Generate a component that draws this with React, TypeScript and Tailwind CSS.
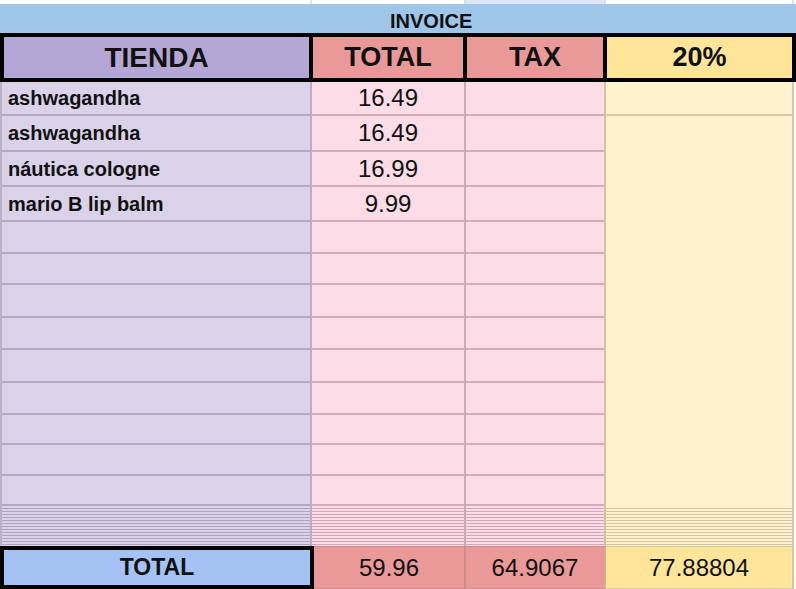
import React from "react";

const rowH = [
  "h-[34px]",
  "h-[36px]",
  "h-[35px]",
  "h-[35px]",
  "h-[32px]",
  "h-[31px]",
  "h-[33px]",
  "h-[32px]",
  "h-[33px]",
  "h-[32px]",
  "h-[30px]",
  "h-[31px]",
  "h-[30px]",
];

const items = ["ashwagandha", "ashwagandha", "náutica cologne", "mario B lip balm"];
const totals = ["16.49", "16.49", "16.99", "9.99"];
const stripes = Array.from({ length: 13 });

export default function App() {
  return (
    <div className="w-[796px] h-[589px] overflow-hidden bg-white text-[#111] font-['Liberation_Sans',Arial,sans-serif]">
      {/* top strip */}
      <div className="flex h-[4px]">
        <div className="w-[312px] border-r-2 border-[#e0e0e0] bg-white" />
        <div className="w-[154px] border-r-2 border-[#e0e0e0] bg-white" />
        <div className="w-[140px] border-r-2 border-[#e0e0e0] bg-[#dfe7f8]" />
        <div className="w-[188px] border-r-2 border-[#e0e0e0] bg-white" />
      </div>

      {/* INVOICE band */}
      <div className="flex h-[29px] items-center bg-[#9fc5e8] pl-[390px] pt-[4px]">
        <span className="text-[20px] font-bold leading-none">INVOICE</span>
      </div>

      {/* Header row */}
      <div className="flex h-[49px] gap-[4px] bg-black p-[4px]">
        <div className="flex w-[305px] items-center justify-center bg-[#b4a7d6] text-[28px] font-bold leading-none">
          TIENDA
        </div>
        <div className="flex w-[150px] items-center justify-center bg-[#ea9999] text-[27px] font-bold leading-none">
          TOTAL
        </div>
        <div className="flex w-[136px] items-center justify-center bg-[#ea9999] text-[27px] font-bold leading-none">
          TAX
        </div>
        <div className="flex w-[185px] items-center justify-center bg-[#ffe599] text-[27px] font-bold leading-none">
          20%
        </div>
      </div>

      {/* Body */}
      <div className="flex h-[464px]">
        {/* TIENDA column */}
        <div className="flex w-[312px] flex-col border-x-2 border-l-[#b9b1c6] border-r-[#c3aac2] bg-[#d9d2e9]">
          {rowH.map((h, i) => (
            <div
              key={i}
              className={`${h} flex items-center border-b-2 border-[#b3a8c5] pl-[6px] text-[20px] font-bold leading-none`}
            >
              {items[i] ?? ""}
            </div>
          ))}
          <div className="flex h-[40px] flex-col">
            {stripes.map((_, i) => (
              <div key={i} className="h-[3px] border-b border-[#aea3c0]" />
            ))}
          </div>
        </div>

        {/* TOTAL column */}
        <div className="flex w-[154px] flex-col border-r-2 border-[#cda9b8] bg-[#fcdce6]">
          {rowH.map((h, i) => (
            <div
              key={i}
              className={`${h} flex items-center justify-center border-b-2 border-[#d5aabb] text-[24px] leading-none`}
            >
              {totals[i] ?? ""}
            </div>
          ))}
          <div className="flex h-[40px] flex-col">
            {stripes.map((_, i) => (
              <div key={i} className="h-[3px] border-b border-[#d2a6b7]" />
            ))}
          </div>
        </div>

        {/* TAX column */}
        <div className="flex w-[140px] flex-col border-r-2 border-[#d3c2a4] bg-[#fcdce6]">
          {rowH.map((h, i) => (
            <div key={i} className={`${h} border-b-2 border-[#d5aabb]`} />
          ))}
          <div className="flex h-[40px] flex-col">
            {stripes.map((_, i) => (
              <div key={i} className="h-[3px] border-b border-[#d2a6b7]" />
            ))}
          </div>
        </div>

        {/* 20% column */}
        <div className="flex w-[188px] flex-col border-r-2 border-[#d7c8a6] bg-[#fff2cc]">
          <div className="h-[34px] border-b-2 border-[#d9caa8]" />
          <div className="flex-1" />
          <div className="flex h-[40px] flex-col">
            {stripes.map((_, i) => (
              <div key={i} className="h-[3px] border-b border-[#d4c5a2]" />
            ))}
          </div>
        </div>
      </div>

      {/* Total row */}
      <div className="flex h-[43px]">
        <div className="flex w-[314px] items-center justify-center border-4 border-black bg-[#a4c2f4] text-[23px] font-bold leading-none">
          TOTAL
        </div>
        <div className="flex w-[152px] items-center justify-center border-y border-r-2 border-[#cf8a8a] bg-[#ea9999] text-[24px] leading-none">
          59.96
        </div>
        <div className="flex w-[140px] items-center justify-center border-y border-r-2 border-y-[#cf8a8a] border-r-[#cfae96] bg-[#ea9999] text-[24px] leading-none">
          64.9067
        </div>
        <div className="flex w-[188px] items-center justify-center border-y border-r-2 border-[#d7c79f] bg-[#ffe599] text-[24px] leading-none">
          77.88804
        </div>
      </div>
    </div>
  );
}
